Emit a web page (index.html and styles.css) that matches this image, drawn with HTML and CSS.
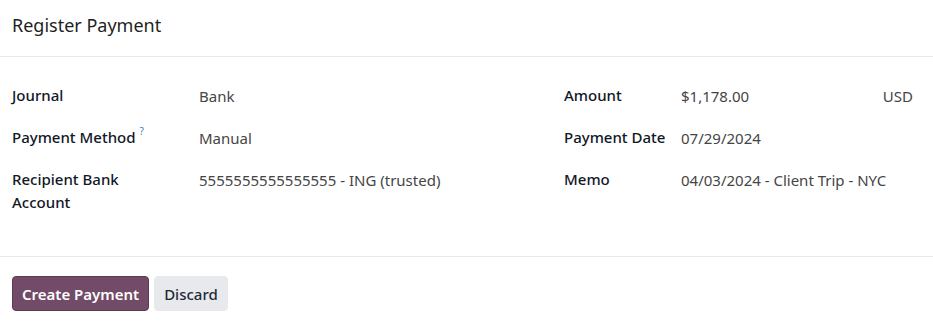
FILE: index.html
```html
<!DOCTYPE html>
<html>
<head>
<meta charset="utf-8">
<link rel="stylesheet" href="styles.css">
</head>
<body>
<div class="dialog">
  <header class="head">
    <h1 class="title">Register Payment</h1>
  </header>
  <main class="body">
    <div class="group left">
      <div class="lbl">Journal</div>
      <div class="val">Bank</div>
      <div class="lbl">Payment Method <sup class="help">?</sup></div>
      <div class="val">Manual</div>
      <div class="lbl">Recipient Bank<br>Account</div>
      <div class="val">5555555555555555 - ING (trusted)</div>
    </div>
    <div class="group right">
      <div class="lbl">Amount</div>
      <div class="val amount"><span>$1,178.00</span><span>USD</span></div>
      <div class="lbl">Payment Date</div>
      <div class="val">07/29/2024</div>
      <div class="lbl">Memo</div>
      <div class="val">04/03/2024 - Client Trip - NYC</div>
    </div>
  </main>
  <footer class="foot">
    <button class="btn primary">Create Payment</button>
    <button class="btn secondary">Discard</button>
  </footer>
</div>
</body>
</html>
```
FILE: styles.css
```css
html, body {
  margin: 0;
  padding: 0;
  background: #ffffff;
}
body {
  font-family: "Noto Sans", "Open Sans", sans-serif;
  font-size: 15px;
  color: #212529;
}
.dialog {
  width: 933px;
  height: 321px;
  overflow: hidden;
}
.head {
  height: 57px;
  border-bottom: 1px solid #e7e9ed;
  display: flex;
  align-items: center;
  padding: 0 12px;
  box-sizing: border-box;
}
.title {
  margin: 0;
  font-size: 18px;
  font-weight: 400;
  color: #1f1f1f;
  padding-bottom: 6px;
}
.body {
  display: grid;
  grid-template-columns: 552px 1fr;
  height: 200px;
  box-sizing: border-box;
  padding: 27px 0 0 12px;
  border-bottom: 1px solid #e7e9ed;
}
.group {
  display: grid;
  align-content: start;
}
.left { grid-template-columns: 187px 1fr; }
.right { grid-template-columns: 117px 1fr; padding-right: 20px; }
.lbl {
  font-weight: 500;
  color: #111827;
  line-height: 23px;
  min-height: 42px;
}
.val {
  color: #454545;
  line-height: 23px;
  padding-top: 1px;
}
.help {
  color: #3f7fb5;
  font-size: 10px;
  font-weight: 400;
  vertical-align: 8px;
  line-height: 0;
}
.amount {
  display: flex;
  justify-content: space-between;
}
.foot {
  display: flex;
  gap: 5px;
  padding: 19px 12px 0;
}
.btn {
  font-family: inherit;
  font-size: 15px;
  height: 35px;
  border-radius: 4px;
  padding: 0 9px;
  cursor: pointer;
}
.primary {
  background: #714b67;
  border: 1px solid #5c3a53;
  color: #ffffff;
  font-weight: 600;
}
.secondary {
  background: #e7e9ed;
  border: 1px solid #e7e9ed;
  color: #1f2937;
  font-weight: 500;
}
```
